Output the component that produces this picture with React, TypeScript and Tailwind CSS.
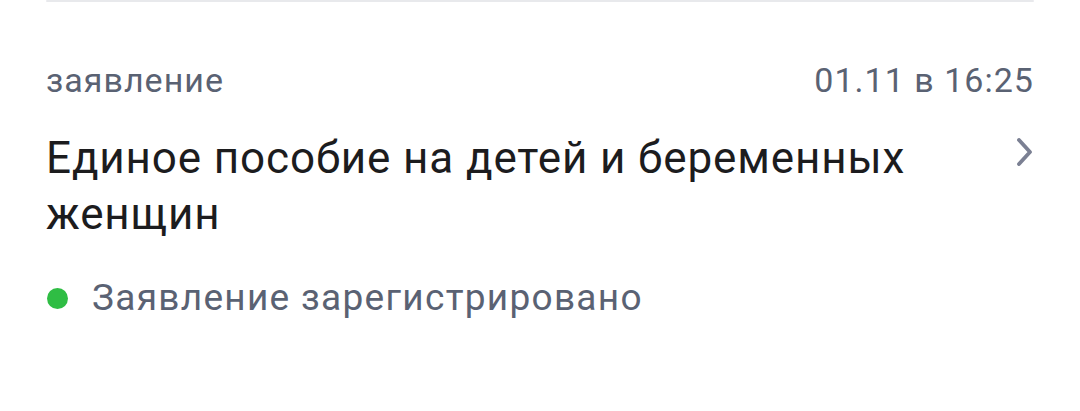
import React from "react";

const ChevronRight = () => (
  <svg width="18" height="28" viewBox="0 0 18 28" fill="none" className="mt-[8px] shrink-0">
    <path
      d="M3 2 L14 14 L3 26"
      stroke="#7b8093"
      strokeWidth="3.8"
      strokeLinecap="round"
      strokeLinejoin="round"
    />
  </svg>
);

const App: React.FC = () => {
  return (
    <main
      className="min-h-screen w-[1080px] h-[411px] bg-white px-[46px] overflow-hidden"
      style={{ fontFamily: "Roboto, 'Noto Sans', sans-serif" }}
    >
      {/* divider of the previous card */}
      <div className="h-[2px] bg-[#e8e9ec] rounded-full" />

      {/* header: type + date */}
      <div className="mt-[58px] flex justify-between items-start text-[34px] leading-[40px] text-[#5a6273] tracking-[0.03em]">
        <span>заявление</span>
        <span>01.11 в 16:25</span>
      </div>

      {/* title */}
      <div className="mt-[30px] flex justify-between items-start">
        <div className="text-[44px] leading-[56px] text-[#1c1c1e] tracking-[0.02em] max-w-[900px]">
          Единое пособие на детей и беременных женщин
        </div>
        <ChevronRight />
      </div>

      {/* status */}
      <div className="mt-[36px] flex items-center gap-[24px]">
        <span className="ml-[1px] w-[21px] h-[21px] rounded-full bg-[#2fbd44] shrink-0" />
        <span className="text-[37px] leading-[40px] text-[#5a6273] tracking-[0.035em]">
          Заявление зарегистрировано
        </span>
      </div>
    </main>
  );
};

export default App;
